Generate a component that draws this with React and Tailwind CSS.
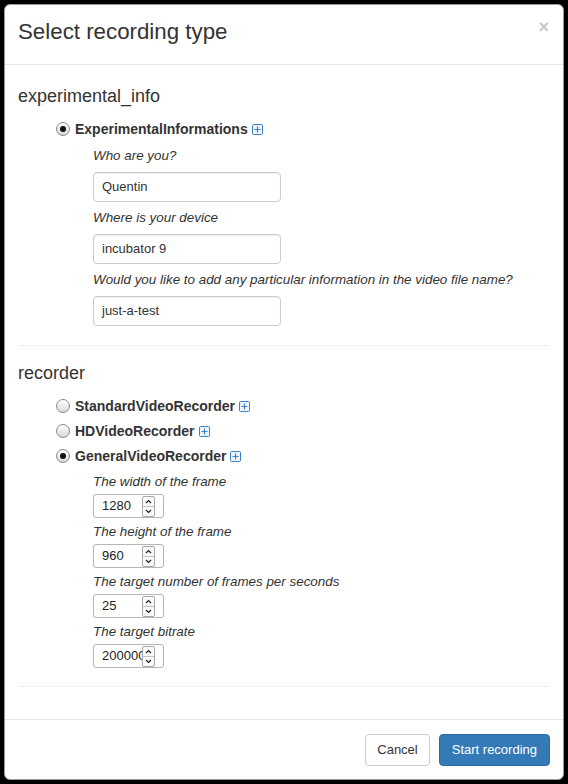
import React from 'react';

function PlusBox() {
    return (
        <svg width="11" height="11" viewBox="0 0 11 11" className="ml-[4px] inline-block">
            <rect x="0.5" y="0.5" width="10" height="10" rx="1" fill="#eef4fb" stroke="#3d82c4" />
            <path d="M5.5 2.5v6M2.5 5.5h6" stroke="#3d82c4" strokeWidth="1.2" />
        </svg>
    );
}

function Radio({ checked }) {
    return (
        <span className="w-[14px] h-[14px] rounded-full border border-[#8a8a8a] bg-gradient-to-b from-[#ffffff] to-[#d8d8d8] flex items-center justify-center shrink-0">
            {checked && <span className="w-[6px] h-[6px] rounded-full bg-[#111]" />}
        </span>
    );
}

function Option({ label, checked }) {
    return (
        <div className="flex items-center h-[20px] pl-[38px]">
            <Radio checked={checked} />
            <span className="ml-[5px] font-bold text-[14px] text-[#333]">{label}</span>
            <PlusBox />
        </div>
    );
}

function TextField({ label, value }) {
    return (
        <div className="flex flex-col">
            <div className="h-[20px] leading-[20px] italic text-[13.4px] text-[#333]">{label}</div>
            <div className="mt-[6px] w-[188px] h-[30px] border border-[#ccc] rounded-[4px] shadow-[inset_0_1px_1px_rgba(0,0,0,0.075)] px-[8px] flex items-center text-[13px] text-[#333]">
                {value}
            </div>
        </div>
    );
}

function NumberField({ label, value }) {
    return (
        <div className="flex flex-col">
            <div className="h-[20px] leading-[20px] italic text-[13.4px] text-[#333]">{label}</div>
            <div className="mt-[2px] w-[71px] h-[24px] border border-[#b5b5b5] rounded-[3px] flex items-center pl-[8px] text-[13px] text-[#222]">
                <span className="w-[40px] overflow-hidden whitespace-nowrap">{value}</span>
                <span className="flex flex-col w-[13px] h-[21px] border border-[#a9a9a9] rounded-[2px] bg-[#fafafa]">
                    <span className="flex-1 flex items-center justify-center border-b border-[#c4c4c4]">
                        <svg width="7" height="5" viewBox="0 0 7 5"><path d="M1 4l2.5-2.5L6 4" fill="none" stroke="#222" strokeWidth="1.2" /></svg>
                    </span>
                    <span className="flex-1 flex items-center justify-center">
                        <svg width="7" height="5" viewBox="0 0 7 5"><path d="M1 1l2.5 2.5L6 1" fill="none" stroke="#222" strokeWidth="1.2" /></svg>
                    </span>
                </span>
            </div>
        </div>
    );
}

export default function App() {
    return (
        <div className="bg-black w-[568px] h-[784px] p-[4px] font-['Liberation_Sans',Arial,sans-serif]">
            <div className="bg-white h-[776px] rounded-[6px] border border-[#999] flex flex-col overflow-hidden">
                <div className="h-[60px] border-b border-[#e5e5e5] flex items-center justify-between pl-[13px] pr-[14px] shrink-0">
                    <h4 className="text-[22.3px] text-[#333] leading-none mt-[-4px]">Select recording type</h4>
                    <span className="text-[18px] font-bold text-[#c8c8c8] leading-none mt-[-16px]">×</span>
                </div>

                <div className="flex-1 px-[13px] pt-[21px]">
                    <div className="h-[20px] leading-[20px] text-[18px] text-[#333]">experimental_info</div>
                    <div className="mt-[13px]">
                        <Option label="ExperimentalInformations" checked />
                    </div>
                    <div className="pl-[75px] mt-[7px] flex flex-col gap-[6px]">
                        <TextField label="Who are you?" value="Quentin" />
                        <TextField label="Where is your device" value="incubator 9" />
                        <TextField label="Would you like to add any particular information in the video file name?" value="just-a-test" />
                    </div>
                    <hr className="mt-[19px] border-t border-[#eee]" />

                    <div className="mt-[17px] h-[20px] leading-[20px] text-[18px] text-[#333]">recorder</div>
                    <div className="mt-[13px] flex flex-col gap-[5px]">
                        <Option label="StandardVideoRecorder" />
                        <Option label="HDVideoRecorder" />
                        <Option label="GeneralVideoRecorder" checked />
                    </div>
                    <div className="pl-[75px] mt-[6px] flex flex-col gap-[4px]">
                        <NumberField label="The width of the frame" value="1280" />
                        <NumberField label="The height of the frame" value="960" />
                        <NumberField label="The target number of frames per seconds" value="25" />
                        <NumberField label="The target bitrate" value="2000000" />
                    </div>
                    <hr className="mt-[18px] border-t border-[#eee]" />
                </div>

                <div className="h-[60px] border-t border-[#e5e5e5] flex items-center justify-end gap-[9px] pr-[13px] shrink-0">
                    <button className="h-[32px] px-[11px] border border-[#ccc] rounded-[4px] bg-white text-[13px] text-[#333]">Cancel</button>
                    <button className="h-[32px] px-[12px] border border-[#2e6da4] rounded-[4px] bg-[#337ab7] text-[13px] text-white">Start recording</button>
                </div>
            </div>
        </div>
    );
}
